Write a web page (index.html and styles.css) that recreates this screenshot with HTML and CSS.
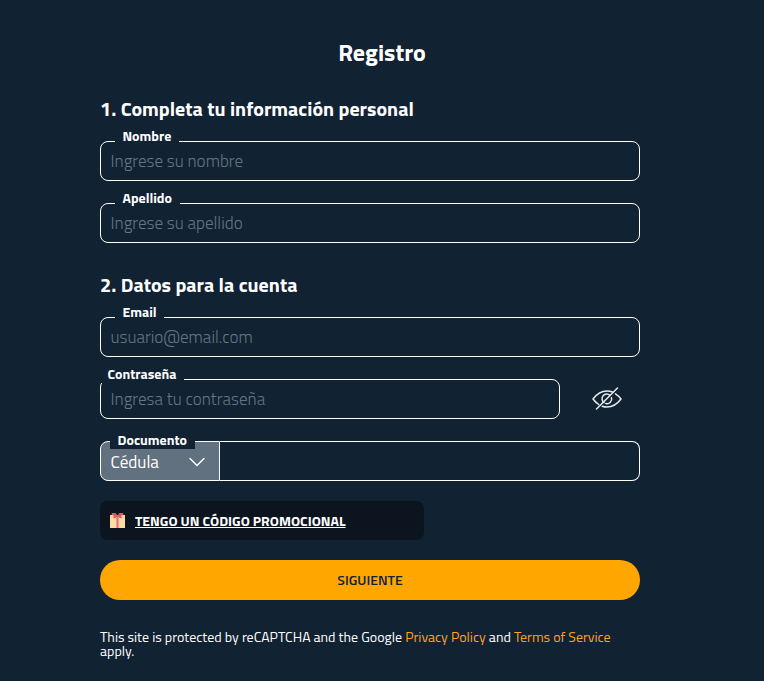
FILE: index.html
```html
<!DOCTYPE html>
<html lang="es">
<head>
  <meta charset="UTF-8" />
  <meta name="viewport" content="width=device-width, initial-scale=1" />
  <title>Registro</title>
  <link rel="stylesheet" href="styles.css">
</head>
<body>

  <h1>Registro</h1>

  <form class="register">
    <h2>1. Completa tu información personal</h2>
    <div class="field">
      <label for="nombre">Nombre</label>
      <input type="text" id="nombre" placeholder="Ingrese su nombre">
    </div>
    <div class="field">
      <label for="apellido">Apellido</label>
      <input type="text" id="apellido" placeholder="Ingrese su apellido">
    </div>

    <h2 class="account">2. Datos para la cuenta</h2>
    <div class="field">
      <label for="email">Email</label>
      <input type="email" id="email" placeholder="usuario@email.com">
    </div>
    <div class="field password">
      <label for="password">Contraseña</label>
      <input type="password" id="password" placeholder="Ingresa tu contraseña">
      <button type="button" class="toggle" aria-label="Mostrar contraseña">
        <svg width="30" height="24" viewBox="0 0 30 24" fill="none" stroke="#e6e9ec" stroke-width="1.5" stroke-linecap="round">
          <path d="M1 12Q7 4 15 4Q18 4 20.500 5M23.500 6.800Q26.500 8.700 29 12Q23 20 15 20Q12.500 20 10.200 19.200M6.700 17.500Q3.500 15.300 1 12" />
          <path d="M18 8.400A4.700 4.700 0 1 0 12 15.600M13.800 16.500A4.700 4.700 0 0 0 19.500 10.700" />
          <path d="M4.500 22L25.500 1" />
        </svg>
      </button>
    </div>
    <div class="field document">
      <label for="documento">Documento</label>
      <div class="type">
        <span>Cédula</span>
        <svg width="16" height="10" viewBox="0 0 16 10" fill="none" stroke="#fff" stroke-width="1.4" stroke-linecap="round" stroke-linejoin="round">
          <path d="M1 1.500L8 8.500L15 1.500" />
        </svg>
      </div>
      <input type="text" id="documento">
    </div>

    <div class="promo">
      <svg width="15" height="15" viewBox="0 0 15 15">
        <path fill="#fbd296" d="M0 2h15v4H0z" />
        <path fill="#fddca5" d="M0 5h15v10H0z" />
        <path fill="#f0a08c" d="M6 3h3v12H6z" />
        <path fill="#e56b78" d="M7 4h1v11H7z" />
        <path fill="#d95b6c" d="M7.500 2.500L5.500 0H2l-.5 1.500L4 3 3 5.500l2-.5 2.500-1.500L10 5l2 .5L11 3l2.500-1.500L13 0H9.500z" />
      </svg>
      <a href="#">TENGO UN CÓDIGO PROMOCIONAL</a>
    </div>

    <button type="submit" class="next">SIGUIENTE</button>

    <p class="captcha">This site is protected by reCAPTCHA and the Google <a href="#">Privacy Policy</a> and <a href="#">Terms of Service</a> apply.</p>
  </form>

</body>
</html>
```
FILE: styles.css
```css
* {
  box-sizing: border-box;
}

body {
  background-color: #112233;
  color: #fff;
  font-family: 'Titillium Web', Roboto, sans-serif;
  margin: 0;
  padding-top: 35px;
  height: 681px;
  overflow: hidden;
}

h1 {
  font-size: 24px;
  line-height: 34px;
  text-align: center;
  margin: 0;
}

.register {
  width: 540px;
  margin: 25px 0 0 100px;
}

h2 {
  font-size: 20px;
  line-height: 30px;
  margin: 0 0 17px;
}

h2.account {
  margin-top: 27px;
}

.field {
  position: relative;
  display: flex;
  height: 40px;
  margin-bottom: 22px;
}

label {
  position: absolute;
  top: -14px;
  left: 15px;
  height: 18px;
  padding: 0 7.5px;
  background-color: #112233;
  font-size: 14px;
  font-weight: bold;
  line-height: 18px;
}

.password label {
  left: 0;
}

.document label {
  top: -10px;
  left: 10px;
}

input {
  flex: 1;
  min-width: 0;
  padding: 0 9.5px;
  background: transparent;
  border: 1px solid #fff;
  border-radius: 8px;
  color: #fff;
  font: 300 17.1px 'Titillium Web', Roboto, sans-serif;
}

input::placeholder {
  color: #667481;
}

.password input {
  flex: none;
  width: 460px;
}

.toggle {
  flex: 1;
  display: flex;
  align-items: center;
  padding: 0 0 0 32px;
  background: none;
  border: none;
}

.type {
  display: flex;
  align-items: center;
  justify-content: space-between;
  width: 120px;
  padding: 1px 14px 0 9.5px;
  background-color: #62717f;
  border: 1px solid #fff;
  border-radius: 8px 0 0 8px;
  font-size: 17.1px;
}

.document input {
  border-left: none;
  border-radius: 0 8px 8px 0;
}

.promo {
  display: flex;
  align-items: center;
  gap: 10px;
  width: 324px;
  height: 39px;
  margin: -2px 0 20px;
  padding-left: 10px;
  background-color: #0b141f;
  border-radius: 8px;
}

.promo a {
  color: #fff;
  font-size: 14px;
  font-weight: bold;
}

.next {
  display: block;
  width: 100%;
  height: 40px;
  padding: 0 0 2px;
  background-color: #ffa700;
  border: none;
  border-radius: 20px;
  color: #112233;
  font: 600 14px 'Titillium Web', Roboto, sans-serif;
}

.captcha {
  margin: 30px 0 0;
  font-size: 14px;
  line-height: 14px;
}

.captcha a {
  color: #ffa21a;
  text-decoration: none;
}
```
